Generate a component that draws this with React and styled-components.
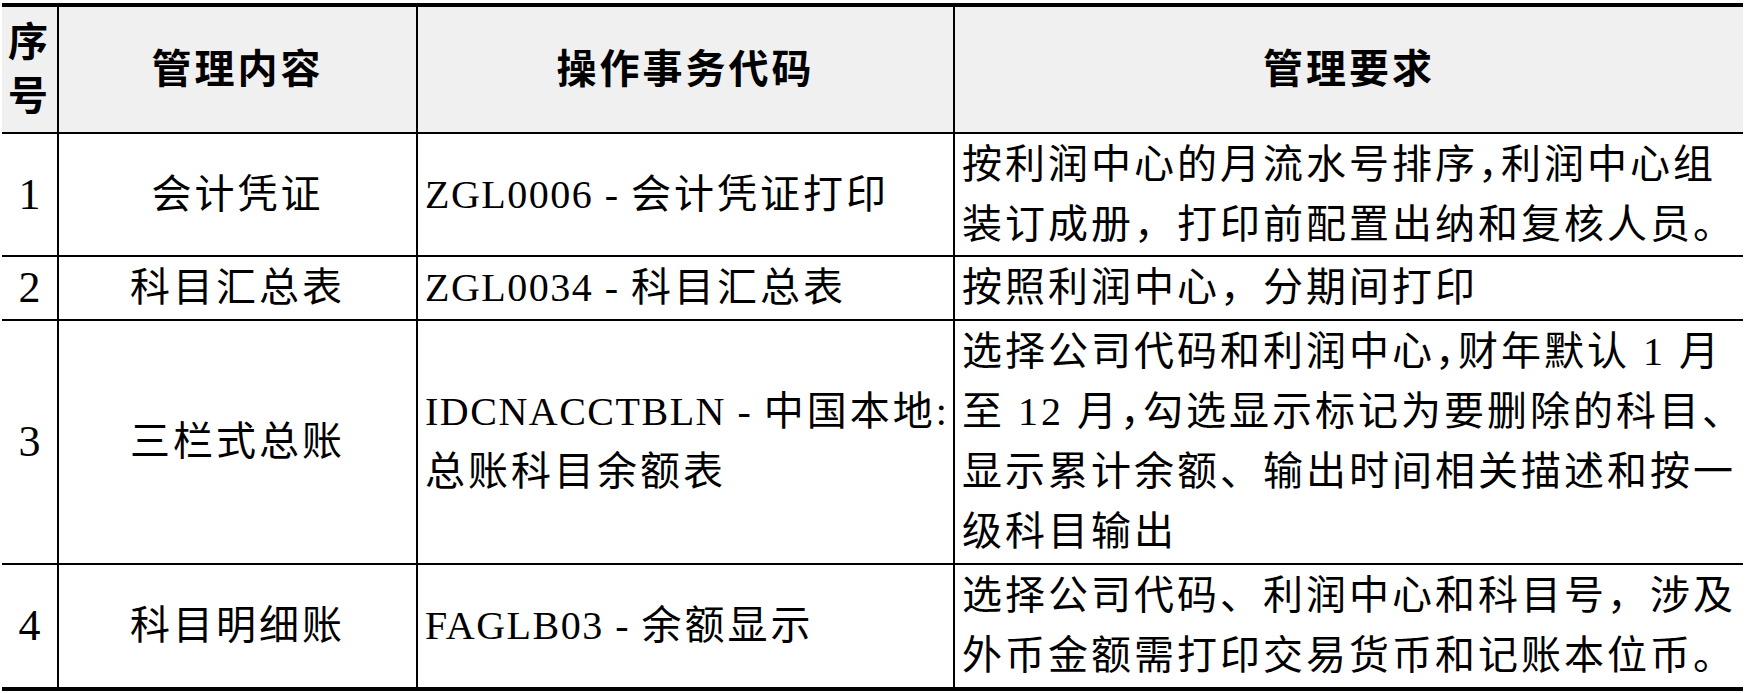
import React from "react";
import styled, { createGlobalStyle } from "styled-components";

const GlobalStyle = createGlobalStyle`
  html, body {
    margin: 0;
    padding: 0;
    background: #ffffff;
  }

  body {
    font-family: "Liberation Serif", "Noto Sans CJK SC", serif;
    color: #000000;
  }
`;

const Table = styled.table`
  border-collapse: collapse;
  table-layout: fixed;
  width: 1741px;
  margin: 3px 0 0 2px;

  font-family: "Liberation Serif", "Noto Sans CJK SC", serif;
  font-size: 40px;
  line-height: 60px;
  letter-spacing: 3px;
  color: #000000;

  border-top: 4px solid #000000;
  border-bottom: 4px solid #000000;

  th,
  td {
    border: 2px solid #000000;
    vertical-align: middle;
    overflow: visible;
  }

  th:first-child,
  td:first-child {
    border-left: none;
  }

  th:last-child,
  td:last-child {
    border-right: none;
  }
`;

const Row = styled.tr`
  height: ${(p) => p.$h}px;
`;

const HeadCell = styled.th`
  background: #f0f0f0;
  font-weight: 700;
  text-align: center;
  padding: 0;
  line-height: ${(p) => (p.$stack ? "54px" : "60px")};
`;

const Cell = styled.td`
  text-align: ${(p) => (p.$center ? "center" : "left")};
  padding: ${(p) => (p.$center ? "0" : "0 0 0 7px")};
  font-weight: 400;
`;

const NoCell = styled.td`
  text-align: center;
  padding: 0;
  font-size: 44px;
  letter-spacing: 0;
`;

const Line = styled.div`
  white-space: nowrap;
`;

const Code = styled.span`
  letter-spacing: 1.5px;
`;

// comma squeezed to half width, as in the source table
const Tight = styled.span`
  font-feature-settings: "halt" 1;
`;

const rows = [
  {
    no: "1",
    item: "会计凭证",
    h: 123,
    code: [{ latin: "ZGL0006 - ", text: "会计凭证打印" }],
    req: [
      <>
        按利润中心的月流水号排序<Tight>，</Tight>利润中心组
      </>,
      "装订成册，打印前配置出纳和复核人员。",
    ],
  },
  {
    no: "2",
    item: "科目汇总表",
    h: 64,
    code: [{ latin: "ZGL0034 - ", text: "科目汇总表" }],
    req: ["按照利润中心，分期间打印"],
  },
  {
    no: "3",
    item: "三栏式总账",
    h: 244,
    code: [
      { latin: "IDCNACCTBLN - ", text: "中国本地:" },
      { latin: "", text: "总账科目余额表" },
    ],
    req: [
      <>
        选择公司代码和利润中心<Tight>，</Tight>财年默认 1 月
      </>,
      <>
        至 12 月<Tight>，</Tight>勾选显示标记为要删除的科目、
      </>,
      "显示累计余额、输出时间相关描述和按一",
      "级科目输出",
    ],
  },
  {
    no: "4",
    item: "科目明细账",
    h: 125,
    code: [{ latin: "FAGLB03 - ", text: "余额显示" }],
    req: [
      "选择公司代码、利润中心和科目号，涉及",
      "外币金额需打印交易货币和记账本位币。",
    ],
  },
];

export default function App() {
  return (
    <>
      <GlobalStyle />
      <Table>
        <colgroup>
          <col style={{ width: 56 }} />
          <col style={{ width: 359 }} />
          <col style={{ width: 537 }} />
          <col style={{ width: 789 }} />
        </colgroup>
        <thead>
          <Row $h={128}>
            <HeadCell $stack>
              序<br />号
            </HeadCell>
            <HeadCell>管理内容</HeadCell>
            <HeadCell>操作事务代码</HeadCell>
            <HeadCell>管理要求</HeadCell>
          </Row>
        </thead>
        <tbody>
          {rows.map((r) => (
            <Row key={r.no} $h={r.h}>
              <NoCell>{r.no}</NoCell>
              <Cell $center>{r.item}</Cell>
              <Cell>
                {r.code.map((c, i) => (
                  <Line key={i}>
                    {c.latin && <Code>{c.latin}</Code>}
                    {c.text}
                  </Line>
                ))}
              </Cell>
              <Cell>
                {r.req.map((line, i) => (
                  <Line key={i}>{line}</Line>
                ))}
              </Cell>
            </Row>
          ))}
        </tbody>
      </Table>
    </>
  );
}
